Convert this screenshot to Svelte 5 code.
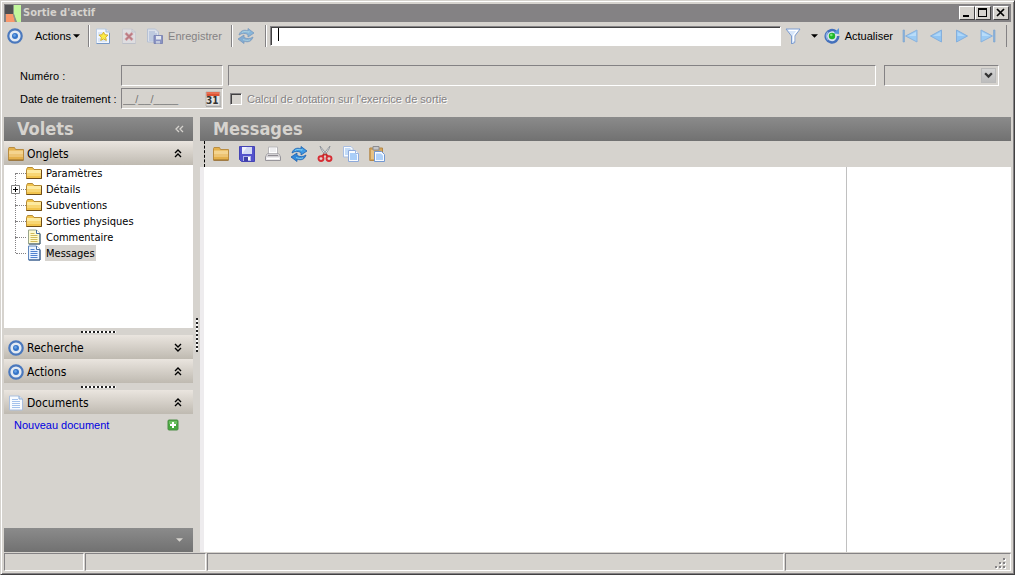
<script>
	let search = $state('');
	let number = $state('');
	let label = $state('');
	let date = $state('__/__/____');
	let computeCharge = $state(false);
	let selected = $state('Messages');
	let message = $state('');

	const treeItems = [
		{ name: 'Paramètres', icon: 'folder' },
		{ name: 'Détails', icon: 'folder', expandable: true },
		{ name: 'Subventions', icon: 'folder' },
		{ name: 'Sorties physiques', icon: 'folder' },
		{ name: 'Commentaire', icon: 'note' },
		{ name: 'Messages', icon: 'page' }
	];

	const editorTools = [
		{ name: 'Ouvrir', icon: 'open' },
		{ name: 'Sauver', icon: 'disk' },
		{ name: 'Imprimer', icon: 'print' },
		{ name: 'Rafraîchir', icon: 'sync' },
		{ name: 'Couper', icon: 'cut' },
		{ name: 'Copier', icon: 'copy' },
		{ name: 'Coller', icon: 'paste' }
	];

	const navTools = [
		{ name: 'Premier', icon: 'first' },
		{ name: 'Précédent', icon: 'prev' },
		{ name: 'Suivant', icon: 'next' },
		{ name: 'Dernier', icon: 'last' }
	];
</script>

{#snippet icon(name)}
	<svg class="icon" viewBox="0 0 16 16" aria-hidden="true">
		{#if name === 'target'}
			<circle cx="8" cy="8" r="6.7" fill="#e3eaf3" stroke="#4a78bd" stroke-width="2.2" />
			<circle cx="8" cy="8" r="3" fill="#3474c8" />
			<circle cx="7.5" cy="7.4" r="1.3" fill="#69a3e6" />
		{:else if name === 'new'}
			<path d="M1.500 1h9.500l3.500 3v11.500h-13z" fill="#f4f8ff" stroke="#b9cbe2" />
			<path d="M11 1v3h3.500" fill="#dfe9f7" stroke="#a3bbdb" />
			<path d="M1.500 15.500h13V5" fill="none" stroke="#7899c6" />
			<path d="M3 5h4M3 7h2M3 11h2M3 13h9" stroke="#c0d3ee" />
			<path
				d="M8.500 4l1.400 2.700 3.100.4-2.300 2.200.6 3.100-2.800-1.400-2.800 1.400.6-3.100L4 7.100l3.100-.4z"
				fill="#fcec45"
				stroke="#cfab2c"
				stroke-width=".9"
			/>
		{:else if name === 'delete'}
			<path d="M1.500 1h9.500l3.500 3v11.500h-13z" fill="#dedde0" stroke="#cbcbd0" />
			<path d="M11 1v3h3.500" fill="none" stroke="#bfc2ca" />
			<path d="M1.500 15.500h13" stroke="#bdc0c9" />
			<path d="M4.500 5l7 7M11.500 5l-7 7" stroke="#cf9ea3" stroke-width="3" />
			<path d="M5 5.500l6 6M11 5.500l-6 6" stroke="#b9767f" stroke-width="1.200" />
		{:else if name === 'save'}
			<path d="M.5 1h8l3 3v10H.5z" fill="#dbe0ea" stroke="#b6c1d4" />
			<path d="M2 4h6M2 6h8M2 8h5M2 10h5M2 12h5" stroke="#a0b2d3" />
			<path d="M7 7.500h8.500v8H7z" fill="#8b94c3" stroke="#737cae" stroke-width=".8" />
			<path d="M9 8h5v3.500H9z" fill="#e5e8f0" />
			<path d="M9 13h4v2.500H9z" fill="#c3cadd" />
		{:else if name === 'sync'}
			<path d="M1 7c1-4 5-6 9-4V.5l6 4.500-6 4V6.500C7 5 4 5 1 7z" fill="#3d9ae5" stroke="#1b5fae" stroke-width=".8" />
			<path
				d="M15 9c-1 4-5 6-9 4v2.500L0 11l6-4v2.500c3 1.500 6 1.500 9-.5z"
				fill="#3388d9"
				stroke="#1b5fae"
				stroke-width=".8"
			/>
			<path d="M4 4.500c2-1.500 4-1.200 7-.3V3M12 11.800c-2 1-4 .7-7-.2" fill="none" stroke="#80d0f3" />
		{:else if name === 'filter'}
			<path d="M1 1h14l-5.200 7v6.500L6.500 16V8z" fill="#d7e6fa" stroke="#7c9bce" />
			<path d="M3.500 2.300h9L8.700 7.200v6" fill="none" stroke="#fff" stroke-width="1.300" />
		{:else if name === 'update'}
			<path d="M12 3.500A6.200 6.200 0 1 0 14.200 8" fill="#d8e4f2" stroke="#4470bb" stroke-width="2.600" />
			<path d="M4 4a5.600 5.600 0 0 0 0 8" fill="none" stroke="#8db2e5" stroke-width="1.300" />
			<path d="M9.500 5.500L15 6V0z" fill="#5a96d8" />
			<circle cx="8" cy="8" r="3.200" fill="#20b82b" />
			<circle cx="7.300" cy="7" r="1.300" fill="#79e57c" />
		{:else if name === 'first' || name === 'last'}
			<g transform={name === 'last' ? 'translate(16 0) scale(-1 1)' : undefined}>
				<path d="M1 2h1.500v12H1z" fill="#8cb4de" stroke="#7ba3cf" stroke-width=".6" />
				<path d="M15 2v12L3.500 8z" fill="#9bcbf4" stroke="#8ab2dd" />
				<path d="M14 4L6 8h8z" fill="#b9dcf9" />
			</g>
		{:else if name === 'prev' || name === 'next'}
			<g transform={name === 'next' ? 'translate(16 0) scale(-1 1)' : undefined}>
				<path d="M13.500 2v12L2.500 8z" fill="#91c4f2" stroke="#85afdc" />
				<path d="M12.500 4L5 8h7.500z" fill="#b0d7f8" />
			</g>
		{:else if name === 'folder'}
			<path d="M.5 4.500l1-2h5l1.500 2h7.500v9H.5z" fill="#f2c44d" stroke="#b58a35" />
			<path d="M1 5h14v3H1z" fill="#fdeaa0" />
			<path d="M1 8h14v3H1z" fill="#f8d673" />
			<path d="M.5 13.500h15V5" fill="none" stroke="#6e4c16" />
		{:else if name === 'open'}
			<path d="M.5 14V2.500l.5-1h5.500l1 2h8V14z" fill="#e4b04b" stroke="#b98c40" />
			<path d="M1 4.500h14v3.500H1z" fill="#f4d48f" />
			<path d="M1 8h14v3H1z" fill="#edc473" />
			<path d="M.5 14.200h15" stroke="#8e6526" />
		{:else if name === 'note' || name === 'page'}
			<path
				d="M2.500 1h8l3.500 3.500V15H2.500z"
				fill={name === 'note' ? '#fffbd0' : '#e9f3ff'}
				stroke={name === 'note' ? '#9aa58c' : '#5f87bd'}
			/>
			<path d="M10.500 1v3.500H14" fill="#fff" stroke="#456da0" />
			<path
				d="M4.500 4.500h4M4.500 6.500h7M4.500 8.500h7M4.500 10.500h7M4.500 12.500h7"
				stroke={name === 'note' ? '#d0ba5c' : '#4f82cf'}
			/>
			<path d="M14 5v10H3" fill="none" stroke="#32527b" />
		{:else if name === 'doc'}
			<path d="M1.500 1h9.500l3.500 3v11h-13z" fill="#f9fcff" stroke="#aabfdf" />
			<path d="M4 4.500h6M4 6.500h8M4 8.500h8M4 10.500h8M4 12.500h8" stroke="#a4c2ec" />
			<path d="M11 1v3h3.500" fill="#d4e2f5" stroke="#8baad2" />
		{:else if name === 'disk'}
			<path d="M.5.5h15v15h-13l-2-2z" fill="#5453cc" stroke="#4444b4" />
			<path d="M3 1h10v7H3z" fill="#f0f2fd" />
			<path d="M8 1h5v7H3z" fill="#d4daf4" />
			<path d="M4 10h8v5H4z" fill="#b2b8e9" />
			<path d="M5 11h4v4H5z" fill="#3f3fa6" />
			<path d="M9 11h2v3H9z" fill="#fff" />
		{:else if name === 'print'}
			<path d="M3.500 1h9v7h-9z" fill="#fff" stroke="#b7b6b9" />
			<path d="M2 8h12l1.500 3v3.500H.5V11z" fill="#eceaec" stroke="#97959a" />
			<path d="M2 8h12l1 3H1z" fill="#d2d0d3" />
			<path d="M3 9.500h10" stroke="#8f8c92" />
			<path d="M2 12.500h12" stroke="#fff" />
			<path d="M5 3h6M5 5h6" stroke="#dddde1" />
		{:else if name === 'cut'}
			<path d="M3 0l1 3 4 6 1-1.500zM13 0l-1 3-4 6-1-1.500z" fill="#fafafa" stroke="#8b9096" stroke-width=".9" />
			<path d="M7.500 8L5 10.500M8.500 8l2.500 2.500" stroke="#c82727" stroke-width="2" />
			<ellipse cx="4" cy="12.600" rx="2.500" ry="2.400" fill="#e5d3d0" stroke="#d62c34" stroke-width="1.900" />
			<ellipse cx="12" cy="12.600" rx="2.500" ry="2.400" fill="#e5d3d0" stroke="#d62c34" stroke-width="1.900" />
		{:else if name === 'copy'}
			<path d="M.5.5h7.500l2 2V11H.5z" fill="#f8fbff" stroke="#a9bee1" />
			<path d="M2 2h5l2 2v5H2z" fill="#c3dbf8" />
			<path d="M5.500 4.500h7l3 3v8h-10z" fill="#f9fcff" stroke="#8eaadb" />
			<path d="M7 7h5l2 2v5H7z" fill="#a9cef8" />
			<path d="M12.500 4.500v3h3" fill="#fff" stroke="#9ab5e0" />
		{:else if name === 'paste'}
			<path d="M.8 2h12.700v12.500H.8z" fill="#d5a65b" stroke="#b38647" />
			<path d="M2 4h3v9H2z" fill="#e6c184" />
			<path d="M4 .5h6V4H4z" fill="#c5c6c9" stroke="#8b8c90" />
			<path d="M5.500 5.500h7l3 3v7h-10z" fill="#f8fbff" stroke="#7398d1" />
			<path d="M7 7.500h5l2 2V14H7z" fill="#b0d1f8" />
		{:else if name === 'calendar'}
			<path d="M1 1h14v14H1z" fill="#e6e4e2" stroke="#b5b3b0" />
			<path d="M1.500 1h13v4h-13z" fill="#dd5435" />
			<path d="M2 2h12" stroke="#f18b70" />
			<path d="M1 15.500h15V5" fill="none" stroke="#aaa" />
		{:else if name === 'add'}
			<rect x="3" y="3" width="10" height="10" rx="1" fill="#46a83d" stroke="#4c8d46" />
			<path d="M4 4h8v3H4z" fill="#6bbf5f" />
			<path d="M8 5v6M5 8h6" stroke="#fff" stroke-width="2" />
		{/if}
	</svg>
{/snippet}

{#snippet caret()}
	<svg class="caret" viewBox="0 0 8 8" aria-hidden="true"><path d="M0 2h8L4 6z" fill="currentColor" /></svg>
{/snippet}

{#snippet section(title, iconName, down)}
	<button class="section">
		{@render icon(iconName)}
		<span>{title}</span>
		<svg class="chevron" class:down viewBox="0 0 8 9" aria-hidden="true">
			<path d="M1 4l3-3 3 3M1 8l3-3 3 3" fill="none" stroke="currentColor" stroke-width="1.400" />
		</svg>
	</button>
{/snippet}

<div class="window">
	<header class="titlebar">
		<svg class="logo" viewBox="0 0 18 17" aria-hidden="true">
			<path d="M1 0h8v9H1z" fill="#505052" />
			<path d="M2 9h7l2 8H2z" fill="#f9986b" />
			<path d="M10 0h7v17h-4L10 9z" fill="#c2f79c" />
			<path d="M9.500 0v9l2 8" fill="none" stroke="#8d9a86" />
		</svg>
		<h1>Sortie d'actif</h1>
		<div class="window-buttons">
			<button aria-label="Réduire">
				<svg viewBox="0 0 14 11"><path d="M3 8h6v2H3z" /></svg>
			</button>
			<button aria-label="Agrandir">
				<svg viewBox="0 0 14 11"><path d="M2 1h9v9H2zM3 3v6h7V3z" fill-rule="evenodd" /></svg>
			</button>
			<button class="close" aria-label="Fermer">
				<svg viewBox="0 0 14 11"><path d="M3 2l7 7M10 2L3 9" fill="none" stroke="#000" stroke-width="1.700" /></svg>
			</button>
		</div>
	</header>

	<div class="toolbar">
		<button class="tool menu">
			{@render icon('target')}
			<span>Actions</span>
			{@render caret()}
		</button>
		<div class="group">
			<button class="tool" aria-label="Nouveau">{@render icon('new')}</button>
			<button class="tool" aria-label="Supprimer" disabled>{@render icon('delete')}</button>
			<button class="tool" disabled>{@render icon('save')}<span>Enregistrer</span></button>
		</div>
		<div class="group sync">
			<button class="tool faded" aria-label="Synchroniser" disabled>{@render icon('sync')}</button>
		</div>
		<div class="group search">
			<input type="text" aria-label="Recherche" bind:value={search} />
			<i class="cursor"></i>
		</div>
		<button class="tool filter" aria-label="Filtrer">{@render icon('filter')}{@render caret()}</button>
		<button class="tool">{@render icon('update')}<span>Actualiser</span></button>
		<nav>
			{#each navTools as tool}
				<button class="tool" aria-label={tool.name}>{@render icon(tool.icon)}</button>
			{/each}
		</nav>
	</div>

	<form class="form">
		<label for="number">Numéro :</label>
		<input id="number" class="sunken" type="text" bind:value={number} readonly />
		<div class="row">
			<input class="sunken grow" type="text" aria-label="Libellé" bind:value={label} readonly />
			<div class="select sunken">
				<select aria-label="Type"><option></option></select>
				<span class="arrow">
					<svg viewBox="0 0 8 6" aria-hidden="true">
						<path d="M1 1l3 3 3-3" fill="none" stroke="#333" stroke-width="2" />
					</svg>
				</span>
			</div>
		</div>
		<label for="date">Date de traitement :</label>
		<div class="date sunken">
			<input id="date" type="text" bind:value={date} />
			<button type="button" class="calendar" aria-label="Calendrier">
				{@render icon('calendar')}
				<b>31</b>
			</button>
		</div>
		<label class="check">
			<input type="checkbox" bind:checked={computeCharge} disabled />
			<span>Calcul de dotation sur l'exercice de sortie</span>
		</label>
	</form>

	<div class="body">
		<aside>
			<div class="panel-title">
				<h2>Volets</h2>
				<button aria-label="Replier">
					<svg viewBox="0 0 9 8" aria-hidden="true">
						<path d="M4 1L1 4l3 3M8 1L5 4l3 3" fill="none" stroke="#d6d3ce" stroke-width="1.300" />
					</svg>
				</button>
			</div>
			{@render section('Onglets', 'open', false)}
			<ul class="tree">
				{#each treeItems as item}
					<li>
						{#if item.expandable}
							<button class="expand" aria-label="Développer">
								<svg viewBox="0 0 9 9">
									<path d="M.5.5h8v8h-8z" fill="#fff" stroke="#808080" />
									<path d="M2 4.500h5M4.500 2v5" stroke="#000" />
								</svg>
							</button>
						{/if}
						<button class="node" class:selected={selected === item.name} onclick={() => (selected = item.name)}>
							{@render icon(item.icon)}
							<span>{item.name}</span>
						</button>
					</li>
				{/each}
			</ul>
			<div class="splitter"><i></i></div>
			{@render section('Recherche', 'target', true)}
			{@render section('Actions', 'target', false)}
			<div class="splitter"><i></i></div>
			{@render section('Documents', 'doc', false)}
			<div class="documents">
				<a href="#nouveau">Nouveau document</a>
				<button aria-label="Ajouter">{@render icon('add')}</button>
			</div>
			<div class="side-footer">{@render caret()}</div>
		</aside>

		<div class="side-splitter"><i></i></div>

		<main>
			<div class="panel-title"><h2>Messages</h2></div>
			<div class="editor-toolbar">
				{#each editorTools as tool}
					<button class="tool" aria-label={tool.name}>{@render icon(tool.icon)}</button>
				{/each}
			</div>
			<div class="editor">
				<textarea aria-label="Messages" bind:value={message}></textarea>
				<div class="margin"></div>
			</div>
		</main>
	</div>

	<footer>
		<span></span>
		<span></span>
		<span></span>
		<span>
			<svg viewBox="0 0 12 12" aria-hidden="true">
				<path d="M9 1h2v2H9zM5 5h2v2H5zM9 5h2v2H9zM1 9h2v2H1zM5 9h2v2H5zM9 9h2v2H9z" fill="#fff" />
				<path d="M8 0h2v2H8zM4 4h2v2H4zM8 4h2v2H8zM0 8h2v2H0zM4 8h2v2H4zM8 8h2v2H8z" fill="#848284" />
			</svg>
		</span>
	</footer>
</div>

<style>
	:global(body) {
		margin: 0;
		background: #d6d3ce;
	}

	.window {
		--face: #d6d3ce;
		--shadow: #848284;
		box-sizing: border-box;
		min-height: 100vh;
		display: flex;
		flex-direction: column;
		padding: 3px;
		border: 1px solid;
		border-color: var(--face) #424142 #424142 var(--face);
		box-shadow:
			inset 1px 1px #fff,
			inset -1px -1px var(--shadow);
		background: var(--face);
		color: #000;
		font-family: Tahoma, 'Liberation Sans', sans-serif;
		font-size: 11px;
		line-height: 14px;
	}

	.window * {
		box-sizing: border-box;
	}

	button,
	input,
	select,
	textarea {
		font: inherit;
		color: inherit;
		margin: 0;
		padding: 0;
		border: 0;
		border-radius: 0;
		background: none;
		outline: none;
	}

	h1,
	h2 {
		margin: 0;
		font-family: 'DejaVu Sans Condensed', 'DejaVu Sans', sans-serif;
		font-weight: bold;
		color: var(--face);
	}

	.icon {
		width: 16px;
		height: 16px;
		flex: none;
		display: block;
	}

	.caret {
		width: 7px;
		height: 8px;
		flex: none;
	}

	/* Title bar */
	.titlebar {
		display: flex;
		align-items: center;
		height: 18px;
		padding-right: 2px;
		background: var(--shadow);
	}
	.logo {
		width: 18px;
		height: 17px;
		margin-right: 1px;
	}
	h1 {
		flex: 1;
		font-size: 11px;
		line-height: 18px;
	}
	.window-buttons {
		display: flex;
	}
	.window-buttons button {
		width: 16px;
		height: 14px;
		display: flex;
		background: var(--face);
		border: 1px solid;
		border-color: #fff #424142 #424142 #fff;
	}
	.window-buttons .close {
		margin-left: 2px;
	}
	.window-buttons svg {
		width: 14px;
		height: 11px;
	}

	/* Main toolbar */
	.toolbar {
		display: flex;
		align-items: center;
		height: 28px;
		padding-left: 3px;
		padding-right: 4px;
	}
	.tool {
		display: flex;
		align-items: center;
		gap: 5px;
	}
	.tool:disabled {
		color: #848284;
	}
	.menu {
		padding-right: 8px;
	}
	.menu span {
		padding-left: 7px;
	}
	.menu .caret {
		margin-left: -3px;
	}
	.group {
		display: flex;
		align-items: center;
		gap: 10px;
		height: 22px;
		padding: 0 9px 0 6px;
		border-left: 1px solid var(--shadow);
		box-shadow: inset 1px 0 #fff;
	}
	.sync {
		padding-right: 11px;
	}
	.faded .icon {
		opacity: 0.5;
	}
	.search {
		position: relative;
		flex: 1;
		padding: 0 4px;
	}
	.search input {
		width: 100%;
		height: 20px;
		padding: 0 6px;
		background: #fff;
		border: 1px solid;
		border-color: var(--shadow) #fff #fff var(--shadow);
		box-shadow: inset 1px 1px #424142;
	}
	.cursor {
		position: absolute;
		left: 12px;
		top: 3px;
		width: 1px;
		height: 13px;
		background: #000;
	}
	.filter {
		gap: 10px;
		margin-right: 6px;
	}
	nav {
		display: flex;
		align-items: center;
		gap: 10px;
		height: 22px;
		margin-left: 9px;
		padding-right: 10px;
		border-right: 1px solid var(--shadow);
	}

	/* Form */
	.form {
		display: grid;
		grid-template-columns: 96px 102px 1fr;
		grid-auto-rows: 21px;
		align-items: center;
		gap: 2px 5px;
		padding: 15px 12px 8px 16px;
	}
	label {
		white-space: nowrap;
	}
	.sunken {
		height: 21px;
		border: 1px solid;
		border-color: var(--shadow) #fff #fff var(--shadow);
	}
	input.sunken {
		width: 100%;
		min-width: 0;
	}
	.row {
		display: flex;
		gap: 8px;
	}
	.grow {
		flex: 1;
	}
	.select {
		position: relative;
		width: 115px;
	}
	.select select {
		width: 100%;
		height: 100%;
		appearance: none;
	}
	.arrow {
		position: absolute;
		right: 2px;
		top: 2px;
		width: 15px;
		height: 15px;
		display: flex;
		align-items: center;
		justify-content: center;
		background: linear-gradient(#d4d4d4, #bdbdbd);
		border: 1px solid #bbb;
		pointer-events: none;
	}
	.arrow svg {
		width: 9px;
		height: 7px;
	}
	.date {
		display: flex;
		align-items: center;
		padding-left: 1px;
		color: #777;
	}
	.date input {
		flex: 1;
		width: 0;
	}
	.calendar {
		position: relative;
		margin-right: 1px;
	}
	.calendar b {
		position: absolute;
		left: 1px;
		top: 4px;
		color: #333;
		font: bold 10px/12px 'DejaVu Sans Condensed', sans-serif;
	}
	.check {
		display: flex;
		align-items: center;
		gap: 5px;
		padding-left: 2px;
		color: #848284;
		text-shadow: 1px 1px #fff;
	}
	.check input {
		appearance: none;
		width: 12px;
		height: 12px;
		border: 1px solid;
		border-color: var(--shadow) #fff #fff var(--shadow);
		box-shadow: inset 1px 1px #424142;
	}

	/* Panels */
	.body {
		flex: 1;
		display: flex;
	}
	aside {
		width: 189px;
		display: flex;
		flex-direction: column;
	}
	.panel-title {
		display: flex;
		align-items: center;
		justify-content: space-between;
		height: 24px;
		padding: 0 9px 0 13px;
		background: linear-gradient(#8b8b8b, #717171);
	}
	h2 {
		font-size: 18px;
		line-height: 24px;
	}
	.panel-title svg {
		display: block;
		width: 9px;
		height: 8px;
	}
	.section {
		display: flex;
		align-items: center;
		gap: 3px;
		height: 24px;
		padding: 1px 11px 0 4px;
		background: linear-gradient(#eae5df, #bfbab1);
		font-family: 'DejaVu Sans Condensed', 'DejaVu Sans', sans-serif;
		font-size: 12px;
		text-align: left;
	}
	.section span {
		flex: 1;
	}
	.chevron {
		width: 8px;
		height: 9px;
	}
	.chevron.down {
		transform: rotate(180deg);
	}

	.tree {
		list-style: none;
		margin: 0;
		padding: 0 0 67px 11px;
		background: #fff;
	}
	.tree li {
		position: relative;
		display: flex;
		height: 16px;
		padding-left: 11px;
	}
	.tree li::before {
		content: '';
		position: absolute;
		left: 1px;
		top: 8px;
		width: 10px;
		border-top: 1px dotted #848284;
	}
	.tree li::after {
		content: '';
		position: absolute;
		left: 0;
		top: 8px;
		height: 16px;
		border-left: 1px dotted #848284;
	}
	.tree li:last-child::after {
		display: none;
	}
	.expand {
		position: absolute;
		z-index: 1;
		left: -4px;
		top: 4px;
		width: 9px;
		height: 9px;
	}
	.expand svg {
		display: block;
	}
	.node {
		display: flex;
		align-items: center;
		gap: 3px;
	}
	.node span {
		padding: 1px 1px 0;
		line-height: 15px;
		font-family: 'DejaVu Sans Condensed', 'DejaVu Sans', sans-serif;
	}
	.node.selected span {
		background: var(--face);
	}

	.splitter {
		display: flex;
		align-items: center;
		justify-content: center;
		height: 7px;
	}
	.splitter i {
		width: 35px;
		height: 2px;
		background: repeating-linear-gradient(90deg, #222 0 2px, #fff 2px 4px);
	}
	.documents {
		display: flex;
		align-items: center;
		justify-content: space-between;
		padding: 3px 12px 0 10px;
	}
	.documents a {
		color: #0000e0;
		text-decoration: none;
	}
	.side-footer {
		display: flex;
		align-items: center;
		justify-content: flex-end;
		height: 24px;
		margin-top: auto;
		padding-right: 10px;
		background: linear-gradient(#8b8b8b, #717171);
		color: var(--face);
	}
	.side-splitter {
		display: flex;
		align-items: center;
		width: 7px;
		padding-left: 3px;
	}
	.side-splitter i {
		width: 2px;
		height: 34px;
		background: repeating-linear-gradient(#222 0 2px, #fff 2px 4px);
	}

	main {
		flex: 1;
		display: flex;
		flex-direction: column;
	}
	.editor-toolbar {
		display: flex;
		align-items: center;
		gap: 10px;
		height: 26px;
		margin-left: 4px;
		padding-left: 8px;
		border-left: 1px dashed #000;
	}
	.editor {
		flex: 1;
		display: flex;
		border-left: 4px solid #eeecee;
		background: #fff;
	}
	textarea {
		flex: 1;
		padding: 2px;
		resize: none;
	}
	.margin {
		width: 165px;
		border-left: 1px solid #c0c0c0;
	}

	/* Status bar */
	footer {
		display: grid;
		grid-template-columns: 80px 121px 1fr 226px;
		gap: 1px;
		height: 18px;
		margin-top: 1px;
	}
	footer span {
		border: 1px solid;
		border-color: var(--shadow) #fff #fff var(--shadow);
	}
	footer span:last-child {
		display: flex;
		align-items: flex-end;
		justify-content: flex-end;
	}
	footer svg {
		width: 12px;
		height: 12px;
		margin-right: 3px;
	}
</style>
